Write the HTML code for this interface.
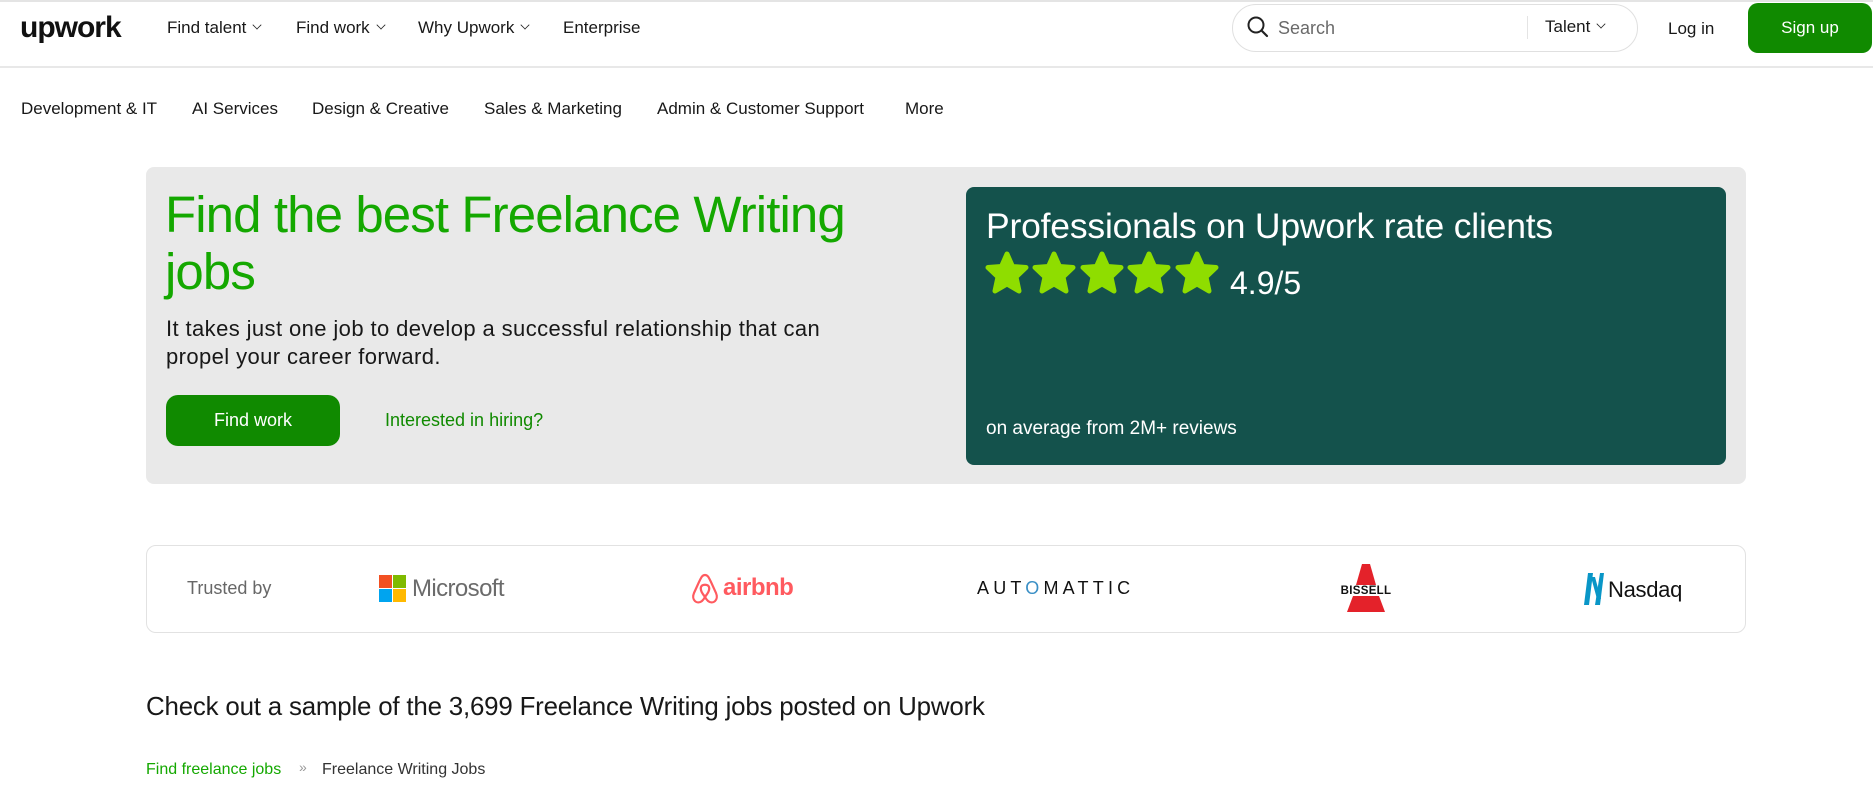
<!DOCTYPE html>
<html><head><meta charset="utf-8">
<style>
*{box-sizing:border-box;margin:0;padding:0}
body{width:1873px;height:811px;overflow:hidden;background:#fff;font-family:"Liberation Sans",Arial,sans-serif;color:#181818;position:relative}
.abs{position:absolute;white-space:nowrap}
.topbar{position:absolute;left:0;top:0;width:1873px;height:68px;border-top:2px solid #e4e4e4;border-bottom:2px solid #e8e8e8}
.nav{font-size:17px;top:18px}
.chev{display:inline-block;width:8px;height:8px;border-right:1.8px solid #222;border-bottom:1.8px solid #222;transform:rotate(45deg) scale(.8);margin-left:7px;position:relative;top:-4px}
.cat{font-size:17px;top:99px}
</style></head><body>
<div class="topbar"></div>
<div class="abs" style="left:20px;top:11px;font-size:30px;font-weight:bold;letter-spacing:-1px;color:#111">upwork</div>
<div class="abs nav" style="left:167px">Find talent<span class="chev"></span></div>
<div class="abs nav" style="left:296px">Find work<span class="chev"></span></div>
<div class="abs nav" style="left:418px">Why Upwork<span class="chev"></span></div>
<div class="abs nav" style="left:563px">Enterprise</div>

<div class="abs" style="left:1232px;top:4px;width:406px;height:48px;border:1.5px solid #e0e0e0;border-radius:24px"></div>
<svg class="abs" style="left:1246px;top:15px" width="24" height="24" viewBox="0 0 24 24"><circle cx="10" cy="10" r="7.5" fill="none" stroke="#222" stroke-width="2"/><line x1="15.5" y1="15.5" x2="21" y2="21" stroke="#222" stroke-width="2.2" stroke-linecap="round"/></svg>
<div class="abs" style="left:1278px;top:18px;font-size:18px;color:#6a6a6a">Search</div>
<div class="abs" style="left:1527px;top:16px;width:1px;height:23px;background:#e4e4e4"></div>
<div class="abs" style="left:1545px;top:17px;font-size:17px">Talent<span class="chev"></span></div>
<div class="abs" style="left:1668px;top:19px;font-size:17px">Log in</div>
<div class="abs" style="left:1748px;top:3px;width:124px;height:50px;background:#108a00;border-radius:10px;color:#fff;font-size:17px;text-align:center;line-height:50px">Sign up</div>

<div class="abs cat" style="left:21px">Development &amp; IT</div>
<div class="abs cat" style="left:192px">AI Services</div>
<div class="abs cat" style="left:312px">Design &amp; Creative</div>
<div class="abs cat" style="left:484px">Sales &amp; Marketing</div>
<div class="abs cat" style="left:657px">Admin &amp; Customer Support</div>
<div class="abs cat" style="left:905px">More</div>

<div class="abs" style="left:146px;top:167px;width:1600px;height:317px;background:#e9e9e9;border-radius:8px"></div>
<div class="abs" style="left:165px;top:186px;font-size:51px;line-height:57px;color:#14a800;letter-spacing:-0.9px;white-space:normal;width:760px">Find the best Freelance Writing jobs</div>
<div class="abs" style="left:166px;top:315px;font-size:22px;line-height:28px;letter-spacing:0.4px;white-space:normal;width:700px">It takes just one job to develop a successful relationship that can propel your career forward.</div>
<div class="abs" style="left:166px;top:395px;width:174px;height:51px;background:#108a00;border-radius:12px;color:#fff;font-size:18px;text-align:center;line-height:51px">Find work</div>
<div class="abs" style="left:385px;top:410px;font-size:18px;color:#108a00">Interested in hiring?</div>

<div class="abs" style="left:966px;top:187px;width:760px;height:278px;background:#14524c;border-radius:8px"></div>
<div class="abs" style="left:986px;top:206px;font-size:35.5px;color:#fff;letter-spacing:-0.2px">Professionals on Upwork rate clients</div>
<svg class="abs" style="left:985px;top:251px" width="236" height="46" viewBox="0 0 236 46">
<defs><path id="st" d="M22 3 L27.5 15.5 L41 16.5 L31 26 L34 40 L22 33 L10 40 L13 26 L3 16.5 L16.5 15.5 Z" fill="#8fdd00" stroke="#8fdd00" stroke-width="5" stroke-linejoin="round"/></defs>
<use href="#st" x="0"/><use href="#st" x="47"/><use href="#st" x="95"/><use href="#st" x="142"/><use href="#st" x="190"/></svg>
<div class="abs" style="left:1230px;top:265px;font-size:32px;color:#fff">4.9/5</div>
<div class="abs" style="left:986px;top:418px;font-size:19px;color:#fff">on average from 2M+ reviews</div>

<div class="abs" style="left:146px;top:545px;width:1600px;height:88px;border:1.5px solid #e2e2e2;border-radius:10px"></div>
<div class="abs" style="left:187px;top:578px;font-size:18px;color:#676767">Trusted by</div>
<svg class="abs" style="left:379px;top:575px" width="28" height="28"><rect x="0" y="0" width="13" height="13" fill="#f25022"/><rect x="14" y="0" width="13" height="13" fill="#7fba00"/><rect x="0" y="14" width="13" height="13" fill="#00a4ef"/><rect x="14" y="14" width="13" height="13" fill="#ffb900"/></svg>
<div class="abs" style="left:412px;top:575px;font-size:24px;color:#6b6b6b;letter-spacing:-0.6px">Microsoft</div>
<svg class="abs" style="left:691px;top:572px" width="28" height="34" viewBox="0 0 28 34"><path d="M14 3 C11 3 10 6 8 10 L3 21 C0 28 6 33 11 29 C13 27 14 25 14 25 C14 25 15 27 17 29 C22 33 28 28 25 21 L20 10 C18 6 17 3 14 3 Z M14 25 C11 21 9 18 10 15 C11 12 17 12 18 15 C19 18 17 21 14 25 Z" fill="none" stroke="#ff5a5f" stroke-width="2.2"/></svg>
<div class="abs" style="left:723px;top:574px;font-size:24px;color:#ff5a5f;font-weight:bold;letter-spacing:-0.5px">airbnb</div>
<div class="abs" style="left:977px;top:578px;font-size:18px;color:#111;letter-spacing:4.2px">AUT<span style="color:#3a8fc5">O</span>MATTIC</div>
<svg class="abs" style="left:1331px;top:562px" width="70" height="52" viewBox="0 0 70 52"><polygon points="31,2 39,2 45,23 25,23" fill="#e4222a"/><polygon points="22,34 48,34 54,50 16,50" fill="#e4222a"/><text x="35" y="32" font-family="Liberation Sans,sans-serif" font-size="11.5" font-weight="bold" text-anchor="middle" fill="#111" letter-spacing="0.3">BISSELL</text></svg>
<svg class="abs" style="left:1583px;top:571px" width="22" height="36" viewBox="0 0 22 36"><polygon points="5,2 10,2 6,34 1,34" fill="#0996c7"/><polygon points="17,2 21,2 17,34 12,34" fill="#0996c7"/><polygon points="8,6 12,6 18,28 14,28" fill="#0996c7"/></svg>
<div class="abs" style="left:1608px;top:577px;font-size:22px;color:#111;letter-spacing:-0.3px">Nasdaq</div>

<div class="abs" style="left:146px;top:693px;font-size:25.9px;letter-spacing:-0.2px">Check out a sample of the 3,699 Freelance Writing jobs posted on Upwork</div>
<div class="abs" style="left:146px;top:761px;font-size:16px;color:#14a800">Find freelance jobs</div>
<div class="abs" style="left:299px;top:759px;font-size:14px;color:#999">»</div>
<div class="abs" style="left:322px;top:761px;font-size:16px;color:#333">Freelance Writing Jobs</div>
</body></html>
